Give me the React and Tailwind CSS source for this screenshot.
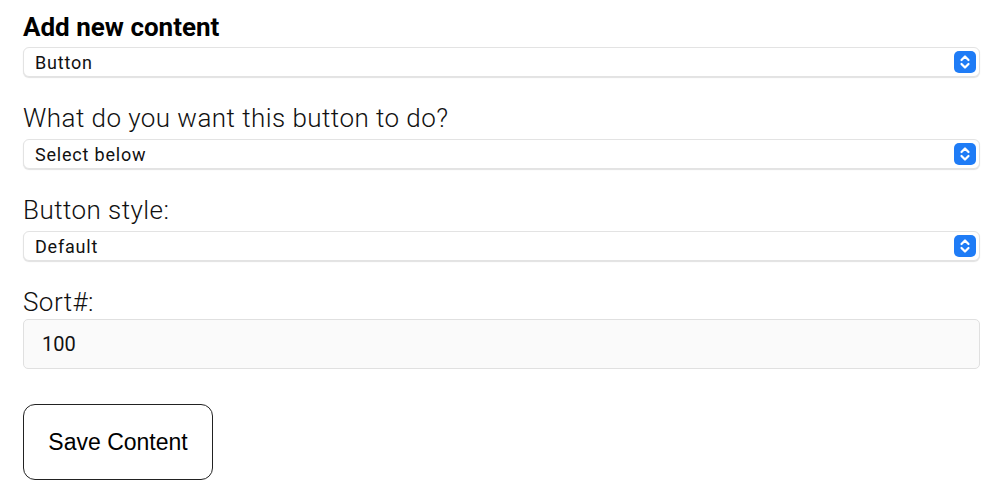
const font = { fontFamily: 'Roboto, "Liberation Sans", sans-serif' };

function Stepper() {
  return (
    <span className="flex h-[22px] w-[22px] items-center justify-center rounded-[5px] bg-[#1f7cf6]">
      <svg width="12" height="16" viewBox="0 0 12 16" fill="none" stroke="white" strokeWidth="2.2" strokeLinecap="round" strokeLinejoin="round">
        <path d="M2.5 6 L6 2.5 L9.5 6" />
        <path d="M2.5 10 L6 13.5 L9.5 10" />
      </svg>
    </span>
  );
}

function SelectBox({ value }) {
  return (
    <div className="flex h-[30px] items-center justify-between rounded-[6px] border border-[#e3e3e3] bg-white pl-[11px] pr-[3px] shadow-[0_1px_1px_rgba(0,0,0,0.12)]">
      <span className="text-[18px] tracking-[0.8px] text-[#111]">{value}</span>
      <Stepper />
    </div>
  );
}

function Label({ children, className }) {
  return (
    <div className={`text-[26px] font-light leading-[30px] tracking-[0.45px] text-[#111] ${className}`}>{children}</div>
  );
}

export default function App() {
  return (
    <div className="min-h-[495px] bg-white pl-[23px] pr-[20px] pt-[12px]" style={font}>
      <div className="mb-[5px] text-[26px] font-bold leading-[30px] text-black">Add new content</div>
      <SelectBox value="Button" />

      <Label className="mt-[26px] mb-[6px]">What do you want this button to do?</Label>
      <SelectBox value="Select below" />

      <Label className="mt-[26px] mb-[6px]">Button style:</Label>
      <SelectBox value="Default" />

      <Label className="mt-[26px] mb-[2px]">Sort#:</Label>
      <div className="flex h-[50px] items-center rounded-[5px] border border-[#e0e0e0] bg-[#fafafa] px-[18px]">
        <span className="text-[20px] text-[#111]">100</span>
      </div>

      <button
        className="mt-[35px] flex h-[76px] w-[190px] items-center justify-center rounded-[12px] border border-[#222] bg-white text-[23px] text-black"
        style={{ fontFamily: '"Liberation Sans", Arial, sans-serif' }}
      >
        Save Content
      </button>
    </div>
  );
}
